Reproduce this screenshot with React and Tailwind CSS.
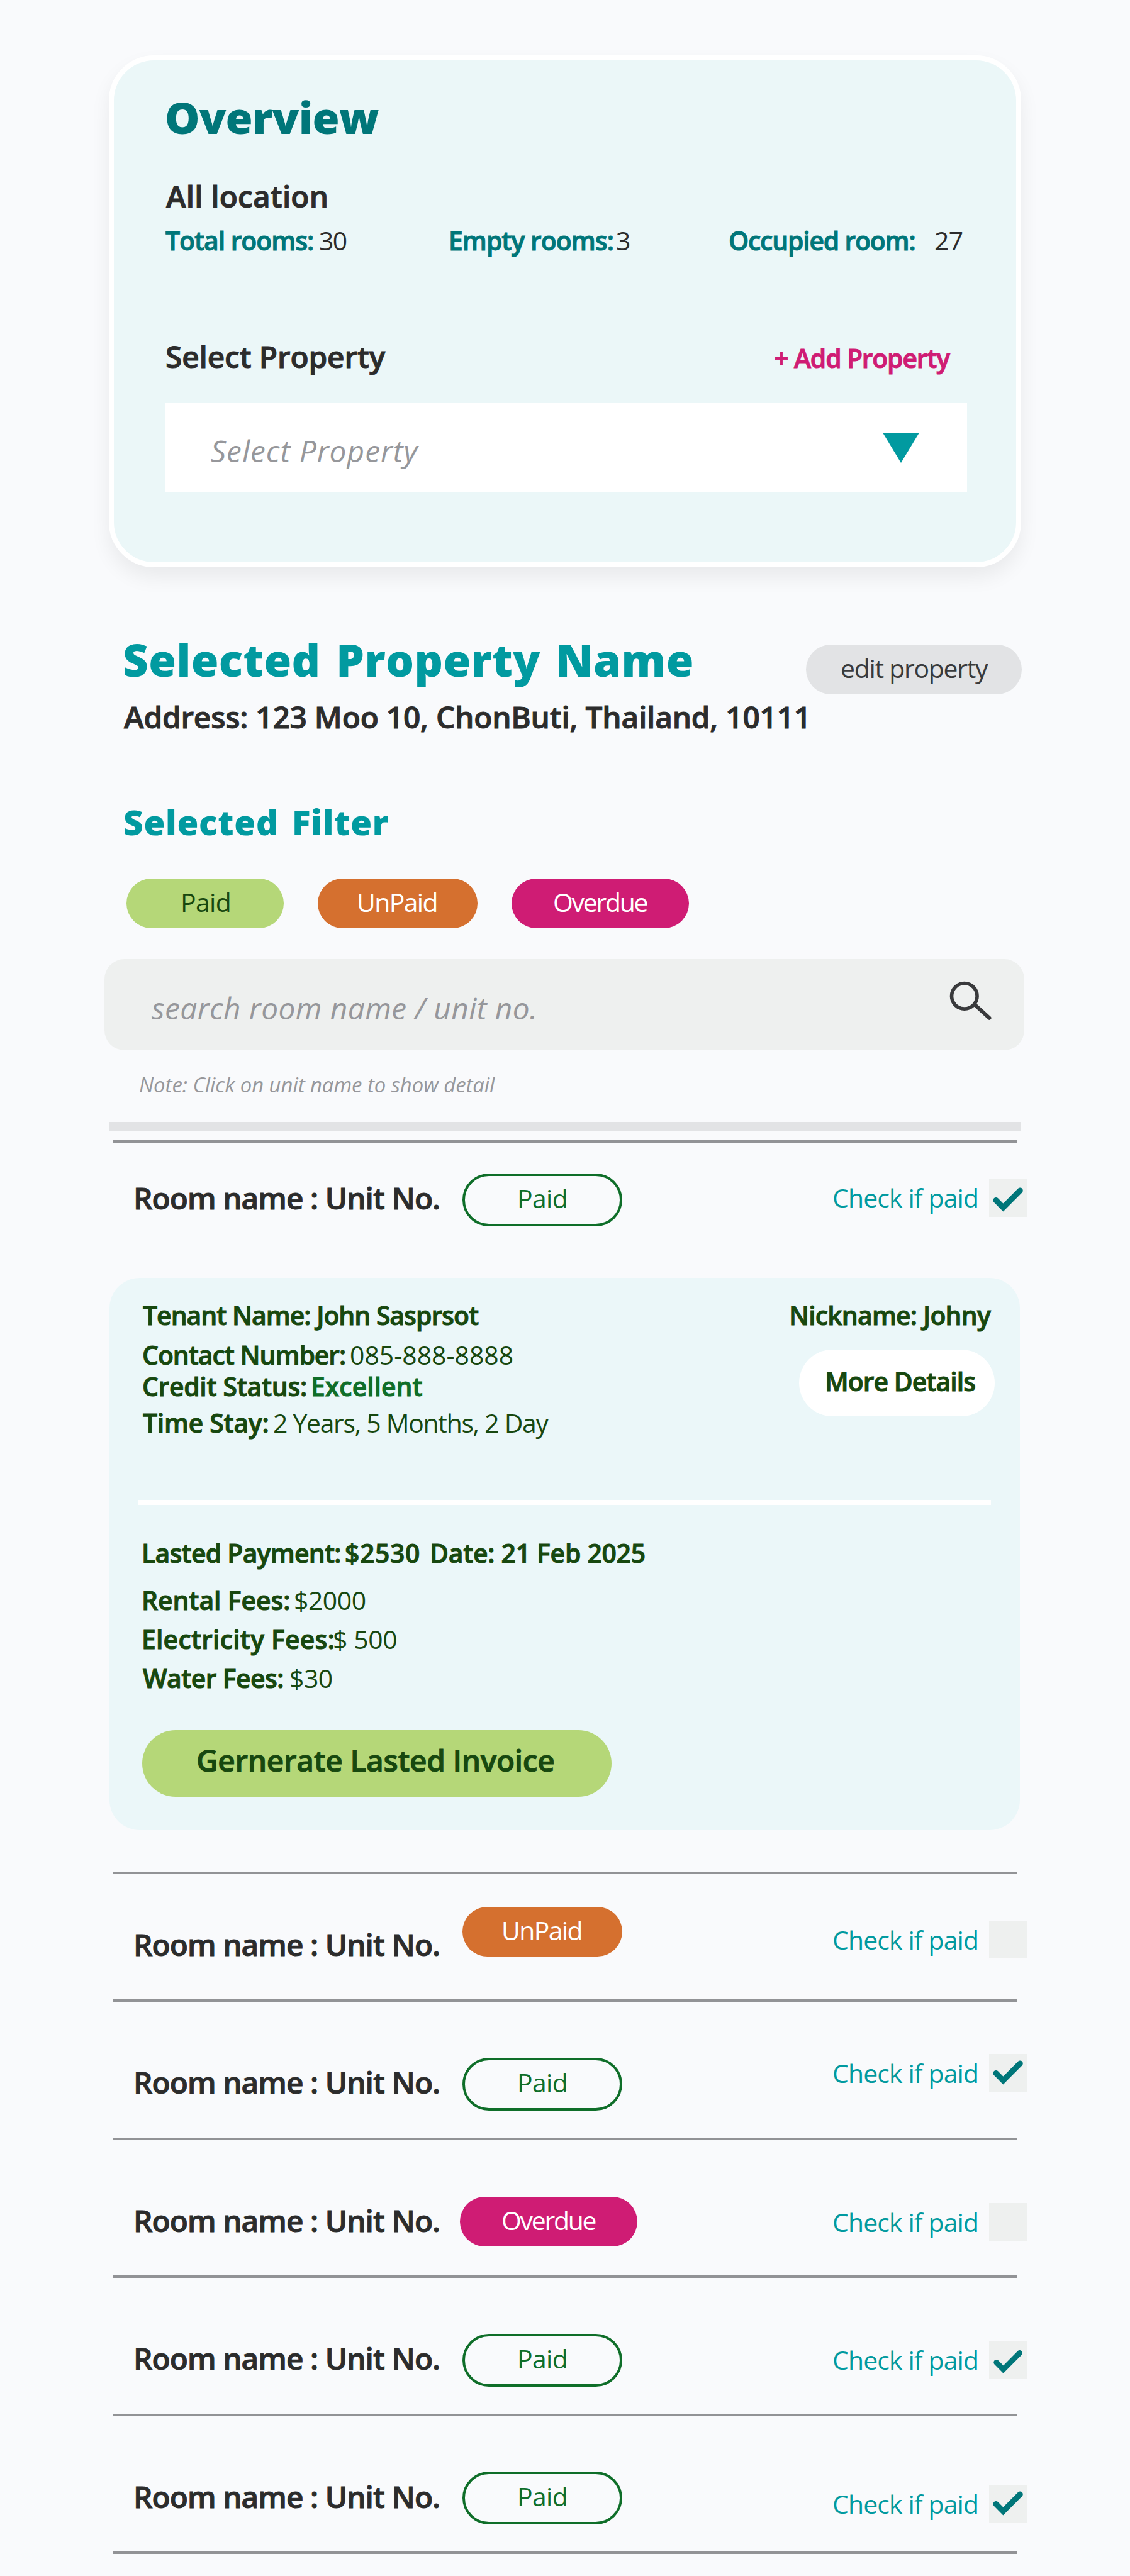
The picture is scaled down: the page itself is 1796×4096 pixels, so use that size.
import React from "react";

function CheckMark({ className = "" }) {
  return (
    <svg viewBox="0 0 60 60" className={"block h-[60px] w-[60px] " + className} fill="none">
      <path d="M11 33.5 L22.4 45 L49.3 18" stroke="#007679" strokeWidth="9" strokeLinecap="round" strokeLinejoin="miter" />
    </svg>
  );
}

function StatusPill({ status, className = "" }) {
  if (status === "paid") {
    return (
      <button className={"h-[84px] w-[254px] shrink-0 rounded-full border-4 border-[#0f6e29] pb-[7px] pl-[83px] text-left text-[40.9px] leading-[60px] tracking-[-0.63px] text-[#0f6e29] " + className}>
        Paid
      </button>
    );
  }
  if (status === "unpaid") {
    return (
      <button className={"h-[79px] w-[254px] shrink-0 rounded-full bg-[#d5702f] pb-[6px] pl-[62px] text-left text-[40.9px] leading-[60px] tracking-[-1.59px] text-white " + className}>
        UnPaid
      </button>
    );
  }
  return (
    <button className={"h-[79px] w-[282px] shrink-0 rounded-full bg-[#cf1c74] pb-[6px] pl-[66px] text-left text-[40.9px] leading-[60px] tracking-[-2.25px] text-white " + className}>
      Overdue
    </button>
  );
}

function Divider({ className = "" }) {
  return <div className={"ml-[179px] h-[4px] w-[1438px] shrink-0 bg-[#929396] " + className} />;
}

function RoomRow({ status, checked, rowClass, nameClass, pillClass, labelClass, boxClass, markClass }) {
  return (
    <div className={"flex w-[1632px] shrink-0 items-start pl-[212px] " + rowClass}>
      <div className={"w-[523px] shrink-0 text-[47.8px] leading-[60px] font-semibold tracking-[-0.95px] whitespace-nowrap text-[#2c2c2c] [-webkit-text-stroke:1px] " + nameClass}>
        Room name : Unit No.
      </div>
      <StatusPill status={status} className={pillClass} />
      <div className="ml-auto flex items-start">
        <span className={"w-[249px] text-[40.9px] leading-[60px] tracking-[-0.85px] whitespace-nowrap text-[#019aa0] " + labelClass}>
          Check if paid
        </span>
        <span className={"block h-[60px] w-[60px] shrink-0 bg-[#eef0ef] " + boxClass}>
          {checked && <CheckMark className={markClass} />}
        </span>
      </div>
    </div>
  );
}

function Overview() {
  return (
    <section className="mt-[88px] ml-[173px] flex h-[814px] w-[1450px] shrink-0 flex-col rounded-[72px] border-8 border-white bg-[#ebf7f8] pl-[81px] shadow-[0_16px_32px_rgba(0,0,0,0.065)]">
      <h1 className="mt-[45px] text-[69.8px] leading-[90px] font-extrabold tracking-[-0.82px] text-[#007679]">Overview</h1>
      <h2 className="mt-[51px] pl-[2px] text-[47.8px] leading-[60px] font-semibold tracking-[0.15px] text-[#2c2c2c] [-webkit-text-stroke:1px]">All location</h2>
      <div className="mt-[10px] flex pl-px text-[40.9px] leading-[60px] whitespace-nowrap text-[#2c2c2c]">
        <div className="flex w-[450px]">
          <span className="w-[244px] font-semibold tracking-[-1.04px] text-[#007679] [-webkit-text-stroke:1px]">Total rooms:</span>
          <span className="tracking-[-1.53px]">30</span>
        </div>
        <div className="flex w-[445px]">
          <span className="w-[266px] font-semibold tracking-[-0.98px] text-[#007679] [-webkit-text-stroke:1px]">Empty rooms:</span>
          <span>3</span>
        </div>
        <div className="flex">
          <span className="w-[327px] font-semibold tracking-[-1.19px] text-[#007679] [-webkit-text-stroke:1px]">Occupied room:</span>
          <span className="tracking-[-0.53px]">27</span>
        </div>
      </div>
      <div className="mt-[125px] flex h-[60px] w-[1275px] items-start leading-[60px] font-semibold whitespace-nowrap [-webkit-text-stroke:1px]">
        <label className="pl-px text-[47.8px] tracking-[-0.15px] text-[#2c2c2c]">Select Property</label>
        <button className="mt-[2px] mr-[28px] ml-auto text-[40.9px] tracking-[-1.17px] text-[#cf1c74]">+ Add Property</button>
      </div>
      <div className="mt-[43px] flex h-[143px] w-[1275px] items-start justify-between bg-white pr-[76px] pl-[73px]">
        <span className="mt-[47px] text-[47.8px] leading-[60px] tracking-[1.01px] text-[#96979b] italic">Select Property</span>
        <svg viewBox="0 0 58 48" className="mt-[48px] h-[48px] w-[58px]">
          <path d="M0 0 H58 L29 48 Z" fill="#019aa0" />
        </svg>
      </div>
    </section>
  );
}

function PropertyHeader() {
  return (
    <section className="mt-[102px] flex w-[1624px] shrink-0 items-start justify-between pl-[195px] whitespace-nowrap">
      <div>
        <h2 className="text-[70.8px] leading-[90px] font-extrabold tracking-[0.4px] [word-spacing:6px] text-[#019aa0]">Selected Property Name</h2>
        <p className="mt-[16px] pl-[2px] text-[47.8px] leading-[60px] font-semibold tracking-[-0.22px] text-[#2c2c2c] [-webkit-text-stroke:1px]">
          Address: 123 Moo 10, ChonButi, Thailand, 10111
        </p>
      </div>
      <button className="mt-[21px] -ml-[20px] h-[79px] w-[343px] shrink-0 rounded-full bg-[#e2e3e5] pb-[6px] pl-[55px] text-left text-[40.9px] leading-[60px] tracking-[-1.26px] text-[#393a3c]">
        edit property
      </button>
    </section>
  );
}

function Filters() {
  return (
    <section className="mt-[102px] flex shrink-0 flex-col">
      <h3 className="ml-[196px] text-[54.8px] leading-[70px] font-extrabold tracking-[0.75px] [word-spacing:6px] text-[#019aa0]">Selected Filter</h3>
      <div className="mt-[55px] ml-[201px] flex gap-[54px]">
        <button className="h-[79px] w-[250px] rounded-full bg-[#b5d778] pb-[6px] pl-[86px] text-left text-[40.9px] leading-[60px] tracking-[-0.63px] text-[#17480f]">
          Paid
        </button>
        <StatusPill status="unpaid" />
        <StatusPill status="overdue" />
      </div>
      <div className="mt-[49px] ml-[166px] flex h-[145px] w-[1462px] items-start justify-between rounded-[32px] bg-[#eef0ef] pr-[50px] pl-[75px]">
        <span className="mt-[48px] text-[47.8px] leading-[60px] tracking-[0.42px] text-[#96979b] italic">search room name / unit no.</span>
        <svg viewBox="0 0 70 66" className="mt-[34px] h-[66px] w-[70px]" fill="none" stroke="#393a3c">
          <circle cx="24.8" cy="24.8" r="20.3" strokeWidth="5.6" />
          <path d="M41 38.2 L64.5 59.8" strokeWidth="6" strokeLinecap="round" />
        </svg>
      </div>
      <p className="mt-[35px] ml-[221px] text-[32.9px] leading-[40px] tracking-[-0.04px] text-[#96979b] italic">Note: Click on unit name to show detail</p>
    </section>
  );
}

function TenantPanel() {
  return (
    <section className="ml-[174px] flex h-[878px] w-[1447px] shrink-0 flex-col rounded-[48px] bg-[#ebf7f9] pt-[34px] pl-[51px] text-[40.9px] leading-[50px] whitespace-nowrap text-[#17480f]">
      <div className="flex h-[221px] items-start">
        <div className="w-[1029px]">
          <div className="pl-[2px] font-semibold tracking-[-1.01px] [-webkit-text-stroke:1px]">Tenant Name: John Sasprsot</div>
          <div className="mt-[13px] flex pl-px">
            <span className="w-[330px] font-semibold tracking-[-1.04px] [-webkit-text-stroke:1px]">Contact Number:</span>
            <span>085-888-8888</span>
          </div>
          <div className="flex pl-px font-semibold [-webkit-text-stroke:1px]">
            <span className="w-[268px] tracking-[-0.32px]">Credit Status:</span>
            <span className="text-[#0f6e29]">Excellent</span>
          </div>
          <div className="mt-[8px] flex pl-[2px]">
            <span className="w-[207px] font-semibold tracking-[-0.28px] [-webkit-text-stroke:1px]">Time Stay:</span>
            <span className="tracking-[-1.29px]">2 Years, 5 Months, 2 Day</span>
          </div>
        </div>
        <div className="font-semibold [-webkit-text-stroke:1px]">
          <div className="tracking-[-0.82px]">Nickname: Johny</div>
          <button className="mt-[30px] ml-[16px] h-[106px] w-[311px] rounded-full bg-white pb-[6px] pl-[41px] text-left tracking-[-0.95px]">
            More Details
          </button>
        </div>
      </div>
      <div className="mt-[98px] -ml-[5px] h-[8px] w-[1355px] shrink-0 bg-white" />
      <div className="mt-[51px] flex font-semibold [-webkit-text-stroke:1px]">
        <span className="w-[323px] tracking-[-0.77px]">Lasted Payment:</span>
        <span className="w-[135px] tracking-[0.65px]">$2530</span>
        <span className="tracking-[-0.28px]">Date: 21 Feb 2025</span>
      </div>
      <div className="mt-[25px] flex">
        <span className="w-[242px] font-semibold tracking-[-0.1px] [-webkit-text-stroke:1px]">Rental Fees:</span>
        <span className="tracking-[-0.47px]">$2000</span>
      </div>
      <div className="mt-[12px] flex">
        <span className="w-[304px] font-semibold tracking-[0.2px] [-webkit-text-stroke:1px]">Electricity Fees:</span>
        <span className="tracking-[-0.4px]">$ 500</span>
      </div>
      <div className="mt-[12px] flex pl-[2px]">
        <span className="w-[233px] font-semibold tracking-[-0.59px] [-webkit-text-stroke:1px]">Water Fees:</span>
        <span className="tracking-[-0.5px]">$30</span>
      </div>
      <button className="mt-[58px] ml-px h-[106px] w-[746px] shrink-0 rounded-full bg-[#b5d778] pb-[10px] pl-[86px] text-left text-[47.8px] leading-[60px] font-semibold tracking-[-0.35px] [-webkit-text-stroke:1px]">
        Gernerate Lasted Invoice
      </button>
    </section>
  );
}

export default function App() {
  return (
    <main className="flex h-[4096px] w-[1796px] flex-col overflow-hidden bg-[#f9fafc] font-['Open_Sans',sans-serif]">
      <Overview />
      <PropertyHeader />
      <Filters />
      <div className="mt-[39px] ml-[174px] h-[15px] w-[1448px] shrink-0 bg-[#e2e3e5]" />
      <Divider className="mt-[14px]" />
      <RoomRow status="paid" checked rowClass="h-[215px]" nameClass="mt-[58px]" pillClass="mt-[49px]" labelClass="mt-[57px]" boxClass="mt-[58px]" markClass="" />
      <TenantPanel />
      <Divider className="mt-[66px]" />
      <RoomRow status="unpaid" rowClass="h-[199px]" nameClass="mt-[82px]" pillClass="mt-[52px]" labelClass="mt-[74px]" boxClass="mt-[74px]" />
      <Divider />
      <RoomRow status="paid" checked rowClass="h-[216px]" nameClass="mt-[98px]" pillClass="mt-[89px]" labelClass="mt-[83px]" boxClass="mt-[83px]" markClass="-mt-[3px]" />
      <Divider />
      <RoomRow status="overdue" rowClass="h-[215px]" nameClass="mt-[98px]" pillClass="mt-[90px] -ml-[4px]" labelClass="mt-[100px]" boxClass="mt-[100px]" />
      <Divider />
      <RoomRow status="paid" checked rowClass="h-[216px]" nameClass="mt-[98px]" pillClass="mt-[89px]" labelClass="mt-[100px]" boxClass="mt-[100px]" markClass="pt-[2px]" />
      <Divider />
      <RoomRow status="paid" checked rowClass="h-[215px]" nameClass="mt-[98px]" pillClass="mt-[88px]" labelClass="mt-[109px]" boxClass="mt-[109px]" markClass="-mt-[3px]" />
      <Divider />
    </main>
  );
}
